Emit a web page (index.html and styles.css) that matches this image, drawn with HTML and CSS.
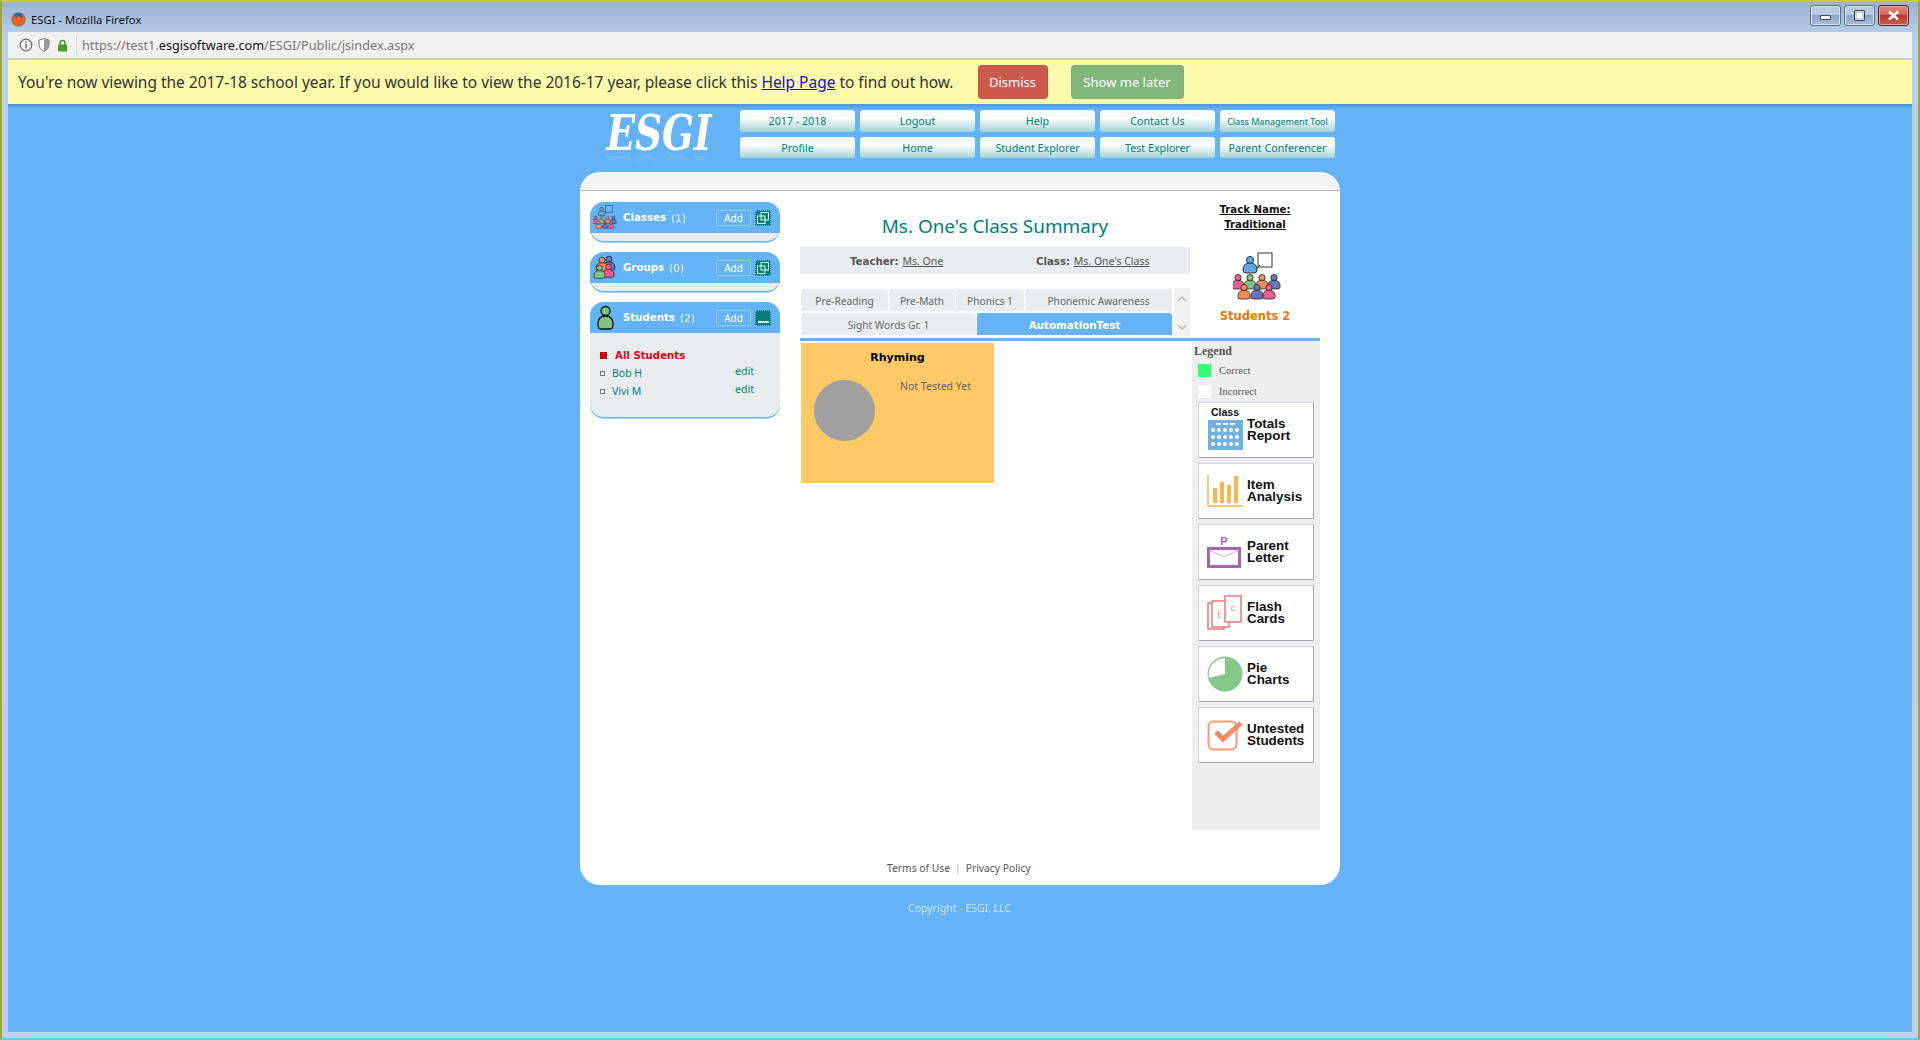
FILE: index.html
```html
<!DOCTYPE html>
<html lang="en">
  <head>
    <meta charset="UTF-8" />
    <title>ESGI - Mozilla Firefox</title>
    <link rel="stylesheet" href="styles.css">
  </head>
  <body>
    <svg class="defs" width="0" height="0">
      <symbol id="person" viewBox="-8 -5 16 20" overflow="visible">
        <circle cx="0" cy="0" r="3.6" stroke="#222" stroke-width="0.9"/>
        <path d="M-7 10q0-7 7-7q7 0 7 7q0 3-3 3h-8q-3 0-3-3z" stroke="#222" stroke-width="0.9"/>
      </symbol>
      <symbol id="class-icon" viewBox="0 0 48 50">
        <rect x="25" y="1" width="14" height="14" fill="none" stroke="#333" stroke-width="1"/>
        <path d="M20 21l7-8" stroke="#333" stroke-width="1"/>
        <use href="#person" x="9" y="3" width="16" height="20" fill="#62a9de"/>
        <use href="#person" x="-2" y="21" width="14" height="18" fill="#ec5e93"/>
        <use href="#person" x="10" y="21" width="14" height="18" fill="#7fc281"/>
        <use href="#person" x="22" y="21" width="14" height="18" fill="#f68a5f"/>
        <use href="#person" x="34" y="21" width="14" height="18" fill="#6a76b8"/>
        <use href="#person" x="4" y="31" width="14" height="18" fill="#f68a5f"/>
        <use href="#person" x="17" y="31" width="14" height="18" fill="#6a76b8"/>
        <use href="#person" x="29" y="31" width="14" height="18" fill="#ec5e93"/>
      </symbol>
      <symbol id="expand-icon" viewBox="0 0 16 16">
        <rect x="2.5" y="6" width="7.5" height="7.5" fill="none" stroke="#cfe" stroke-width="1"/>
        <rect x="6" y="2.5" width="7.5" height="7.5" fill="none" stroke="#cfe" stroke-width="1"/>
      </symbol>
    </svg>

    <div class="window">
      <div class="titlebar">
        <svg class="ff-logo" width="15" height="15" viewBox="0 0 16 16">
          <circle cx="8" cy="8" r="7.5" fill="#2f5f9e"/>
          <path d="M3 2.500Q1 5 1 8a7 7 0 0 0 14 0Q15 4 11.500 2q1.500 3-.5 5-1.500-3-4.500-3.500Q7.500 6 5.500 6 4 5.500 3 2.500z" fill="#e8661c"/>
        </svg>
        <span class="title-text">ESGI - Mozilla Firefox</span>
        <div class="win-controls">
          <div class="win-btn"><i class="glyph-min"></i></div>
          <div class="win-btn"><i class="glyph-max"></i></div>
          <div class="win-btn win-close">
            <svg width="13" height="11" viewBox="0 0 13 11"><path d="M2 1.500l9 8M11 1.500l-9 8" stroke="#fff" stroke-width="2.600"/></svg>
          </div>
        </div>
      </div>

      <div class="toolbar">
        <svg width="14" height="14" viewBox="0 0 14 14">
          <circle cx="7" cy="7" r="5.800" fill="none" stroke="#666" stroke-width="1.200"/>
          <path d="M7 6v4.500M7 3.500v1.500" stroke="#666" stroke-width="1.400"/>
        </svg>
        <svg width="12" height="14" viewBox="0 0 12 14">
          <path d="M1 2l5-1.500L11 2v5q0 4-5 6.500Q1 11 1 7z" fill="#fff" stroke="#777" stroke-width="1"/>
          <path d="M6 1v12q5-2.500 5-6V2z" fill="#999"/>
        </svg>
        <svg class="lock" width="11" height="13" viewBox="0 0 11 13">
          <path d="M3 6V4a2.500 2.500 0 0 1 5 0v2" fill="none" stroke="#4a9a2a" stroke-width="1.500"/>
          <rect x="1" y="5.500" width="9" height="7" rx="1" fill="#4a9a2a"/>
        </svg>
        <span class="url">https://test1.<b>esgisoftware.com</b>/ESGI/Public/jsindex.aspx</span>
      </div>

      <div class="banner">
        <span>You're now viewing the 2017-18 school year. If you would like to view the 2016-17 year, please click this <a href="#">Help Page</a> to find out how.</span>
        <button class="banner-btn btn-dismiss">Dismiss</button>
        <button class="banner-btn btn-later">Show me later</button>
      </div>

      <div class="page">
        <div class="shell">
          <header class="top">
            <div class="logo">ESGI</div>
            <nav class="nav">
              <a class="nav-btn">2017 - 2018</a>
              <a class="nav-btn">Logout</a>
              <a class="nav-btn">Help</a>
              <a class="nav-btn">Contact Us</a>
              <a class="nav-btn nav-small">Class Management Tool</a>
              <a class="nav-btn">Profile</a>
              <a class="nav-btn">Home</a>
              <a class="nav-btn">Student Explorer</a>
              <a class="nav-btn">Test Explorer</a>
              <a class="nav-btn">Parent Conferencer</a>
            </nav>
          </header>

          <div class="card">
            <div class="card-strip"></div>
            <div class="card-main">
              <aside class="side">
                <section class="panel">
                  <div class="panel-head">
                    <svg class="panel-icon" width="24" height="25"><use href="#class-icon"/></svg>
                    <span class="panel-name">Classes</span><span class="panel-count">(1)</span>
                    <span class="add-btn">Add</span>
                    <span class="sq-btn"><svg width="16" height="16"><use href="#expand-icon"/></svg></span>
                  </div>
                  <div class="panel-foot"></div>
                </section>
                <section class="panel">
                  <div class="panel-head">
                    <svg class="panel-icon" width="24" height="25" viewBox="0 0 24 25">
                      <use href="#person" x="9" y="0" width="14" height="17" fill="#6a76b8"/>
                      <use href="#person" x="2" y="1" width="14" height="17" fill="#f68a5f"/>
                      <use href="#person" x="9" y="8" width="13" height="16" fill="#ec5e93"/>
                      <use href="#person" x="0" y="9" width="13" height="16" fill="#7fc281"/>
                    </svg>
                    <span class="panel-name">Groups</span><span class="panel-count">(0)</span>
                    <span class="add-btn">Add</span>
                    <span class="sq-btn"><svg width="16" height="16"><use href="#expand-icon"/></svg></span>
                  </div>
                  <div class="panel-foot"></div>
                </section>
                <section class="panel">
                  <div class="panel-head">
                    <svg class="panel-icon" width="24" height="25" viewBox="0 0 24 25">
                      <circle cx="12.500" cy="6" r="4.500" fill="#7fc281" stroke="#111" stroke-width="1.300"/>
                      <path d="M5 19q0-8 7.500-8T20 19q0 5-3 5H8q-3 0-3-5z" fill="#7fc281" stroke="#111" stroke-width="1.300"/>
                    </svg>
                    <span class="panel-name">Students</span><span class="panel-count">(2)</span>
                    <span class="add-btn">Add</span>
                    <span class="sq-btn"><i class="sq-dash"></i></span>
                  </div>
                  <div class="panel-list">
                    <div class="all-row"><i class="bullet-red"></i>All Students</div>
                    <div class="student-row"><i class="bullet"></i><a class="student">Bob H</a><a class="edit">edit</a></div>
                    <div class="student-row"><i class="bullet"></i><a class="student">Vivi M</a><a class="edit">edit</a></div>
                  </div>
                </section>
              </aside>

              <main class="summary">
                <div class="summary-top">
                  <div class="summary-head">
                    <h1 class="summary-title">Ms. One's Class Summary</h1>
                    <div class="info-bar">
                      <span><b>Teacher:</b> <u>Ms. One</u></span>
                      <span><b>Class:</b> <u>Ms. One's Class</u></span>
                    </div>
                    <div class="tabs">
                      <div class="tab-rows">
                        <div class="tab-row tab-row-1">
                          <span class="tab">Pre-Reading</span>
                          <span class="tab">Pre-Math</span>
                          <span class="tab">Phonics 1</span>
                          <span class="tab">Phonemic Awareness</span>
                        </div>
                        <div class="tab-row tab-row-2">
                          <span class="tab">Sight Words Gr. 1</span>
                          <span class="tab tab-active">AutomationTest</span>
                        </div>
                      </div>
                      <div class="tab-scroll">
                        <svg width="10" height="6" viewBox="0 0 10 6"><path d="M1 5l4-4 4 4" fill="none" stroke="#bbb" stroke-width="1.500"/></svg>
                        <svg width="10" height="6" viewBox="0 0 10 6"><path d="M1 1l4 4 4-4" fill="none" stroke="#bbb" stroke-width="1.500"/></svg>
                      </div>
                    </div>
                  </div>
                  <div class="track">
                    <div class="track-name">Track Name:<br>Traditional</div>
                    <svg class="track-icon" width="48" height="50"><use href="#class-icon"/></svg>
                    <div class="track-count">Students 2</div>
                  </div>
                </div>

                <div class="summary-body">
                  <div class="tests">
                    <div class="test-card">
                      <div class="test-name">Rhyming</div>
                      <div class="test-row">
                        <div class="test-pie"></div>
                        <div class="test-note">Not Tested Yet</div>
                      </div>
                    </div>
                  </div>

                  <div class="reports">
                    <div class="legend-title">Legend</div>
                    <div class="legend-row"><i class="swatch swatch-green"></i>Correct</div>
                    <div class="legend-row legend-row-last"><i class="swatch swatch-white"></i>Incorrect</div>

                    <a class="report">
                      <svg class="icon-totals" width="36" height="44" viewBox="0 0 36 44">
                        <text x="18" y="9" class="report-over">Class</text>
                        <rect x="1" y="13" width="35" height="30" fill="#6fb1e2"/>
                        <g fill="#fff">
                          <rect x="9" y="16" width="5" height="2"/><rect x="16" y="16" width="5" height="2"/><rect x="23" y="16" width="5" height="2"/>
                          <circle cx="6" cy="23" r="2"/><circle cx="12" cy="23" r="2"/><circle cx="18" cy="23" r="2"/><circle cx="24" cy="23" r="2"/><circle cx="30" cy="23" r="2"/>
                          <circle cx="6" cy="30" r="2"/><circle cx="12" cy="30" r="2"/><circle cx="18" cy="30" r="2"/><circle cx="24" cy="30" r="2"/><circle cx="30" cy="30" r="2"/>
                          <circle cx="6" cy="37" r="2"/><circle cx="12" cy="37" r="2"/><circle cx="18" cy="37" r="2"/><circle cx="24" cy="37" r="2"/><circle cx="30" cy="37" r="2"/>
                        </g>
                      </svg>
                      <span class="report-text">Totals<br>Report</span>
                    </a>
                    <a class="report">
                      <svg width="36" height="32" viewBox="0 0 36 32">
                        <path d="M1 0v31h35" fill="none" stroke="#fbb54c" stroke-width="1.500"/>
                        <g fill="#fbb54c">
                          <rect x="6" y="13" width="4" height="15"/><rect x="13" y="7" width="4" height="21"/><rect x="20" y="10" width="4" height="18"/><rect x="27" y="1" width="4" height="27"/>
                        </g>
                      </svg>
                      <span class="report-text">Item<br>Analysis</span>
                    </a>
                    <a class="report">
                      <svg width="36" height="34" viewBox="0 0 36 34">
                        <text x="17" y="11" class="report-p">P</text>
                        <rect x="1.500" y="14.500" width="31" height="18" fill="#fff" stroke="#a964ae" stroke-width="3"/>
                        <path d="M2 16l15 7 15-7" fill="none" stroke="#d3a8d6" stroke-width="1"/>
                      </svg>
                      <span class="report-text">Parent<br>Letter</span>
                    </a>
                    <a class="report">
                      <svg class="icon-tall" width="36" height="36" viewBox="0 0 36 36">
                        <rect x="1" y="8" width="16" height="26" fill="#fff" stroke="#e97a7a" stroke-width="1.500"/>
                        <rect x="5" y="6" width="17" height="26" fill="#fff" stroke="#e97a7a" stroke-width="1.500"/>
                        <rect x="18" y="1" width="16" height="26" fill="#fff" stroke="#e97a7a" stroke-width="1.500"/>
                        <text x="12" y="23" class="report-card-letter">f</text>
                        <text x="26" y="16" class="report-card-letter">c</text>
                      </svg>
                      <span class="report-text">Flash<br>Cards</span>
                    </a>
                    <a class="report">
                      <svg class="icon-tall" width="36" height="36" viewBox="0 0 36 36">
                        <circle cx="18" cy="18" r="17" fill="#85c787"/>
                        <path d="M18 18V2A16.500 16.500 0 0 0 2 22z" fill="#fff"/>
                        <circle cx="18" cy="18" r="17" fill="none" stroke="#85c787" stroke-width="1"/>
                      </svg>
                      <span class="report-text">Pie<br>Charts</span>
                    </a>
                    <a class="report">
                      <svg width="36" height="32" viewBox="0 0 36 32">
                        <rect x="1.500" y="2.500" width="28" height="28" rx="5" fill="#fff" stroke="#f79a76" stroke-width="2"/>
                        <path d="M9 13l7 7L34 4" fill="none" stroke="#f58a64" stroke-width="5"/>
                      </svg>
                      <span class="report-text">Untested<br>Students</span>
                    </a>
                  </div>
                </div>
              </main>
            </div>

            <footer class="card-foot">
              <a>Terms of Use</a><span class="foot-sep">|</span><a>Privacy Policy</a>
            </footer>
          </div>

          <div class="copyright">Copyright - ESGI, LLC</div>
        </div>
      </div>
    </div>
  </body>
</html>
```

FILE: styles.css
```css
* {
  box-sizing: border-box;
}

html,
body {
  margin: 0;
  height: 100%;
  overflow: hidden;
}

body {
  font-family: "Noto Sans", sans-serif;
  font-size: 11px;
}

.defs {
  position: absolute;
}

/* browser window */
.window {
  height: 1040px;
  display: flex;
  flex-direction: column;
  padding: 0 6px 6px;
  border: 2px solid #a3a336;
  border-top-color: #c9c93e;
  border-bottom-color: #35e0f0;
  background: linear-gradient(#9ab3d2 0, #b9d0ea 36px, #bcd0e9 100%);
}

.titlebar {
  height: 30px;
  flex: none;
  display: flex;
  align-items: center;
  gap: 5px;
  padding: 4px 0 0 3px;
}

.title-text {
  font-size: 11.300px;
  color: #111;
}

.win-controls {
  margin-left: auto;
  display: flex;
  gap: 3px;
  margin-right: 3px;
  margin-top: -7px;
}

.win-btn {
  width: 31px;
  height: 21px;
  border: 1px solid #5f6e85;
  border-radius: 3px;
  display: flex;
  align-items: center;
  justify-content: center;
  background: linear-gradient(#b6cbe4 0, #b6cbe4 45%, #8ba6c5 50%, #a5bfdc 100%);
  box-shadow: inset 0 0 0 1px #d8e4f2;
}

.win-close {
  border-color: #5a1f28;
  background: linear-gradient(#dc8a7c 0, #d2675a 45%, #b7352a 50%, #c9604f 100%);
  box-shadow: inset 0 0 0 1px #e6a79c;
}

.glyph-min {
  width: 11px;
  height: 5px;
  margin-top: 4px;
  background: #fff;
  border: 1px solid #444;
  border-radius: 1px;
}

.glyph-max {
  width: 11px;
  height: 11px;
  background: #fff;
  border: 1px solid #444;
  border-radius: 1px;
  box-shadow: inset 0 0 0 2px #c5d3e5;
}

.toolbar {
  height: 28px;
  flex: none;
  display: flex;
  align-items: center;
  gap: 5px;
  padding-left: 11px;
  background: #f0f0f0;
  border-bottom: 2px solid #cfcfcf;
}

.lock {
  margin-left: 2px;
}

.url {
  margin-left: 3px;
  padding-left: 5px;
  border-left: 1px solid #d8d8d8;
  line-height: 18px;
  font-size: 12.700px;
  color: #777;
}

.url b {
  font-weight: 400;
  color: #111;
}

.banner {
  height: 44px;
  flex: none;
  display: flex;
  align-items: center;
  padding-left: 10px;
  background: #fdf9ac;
  font-size: 15.500px;
  letter-spacing: -0.02px;
  color: #333;
}

.banner a {
  color: #1a0dcc;
  text-decoration: underline;
}

.banner-btn {
  height: 34px;
  border: 1px solid rgba(0, 0, 0, 0.06);
  border-radius: 4px;
  color: #fff;
  font: 13px "Noto Sans", sans-serif;
}

.btn-dismiss {
  width: 70px;
  margin-left: 24px;
  background: #cb5a4c;
}

.btn-later {
  width: 113px;
  margin-left: 23px;
  background: #82b77c;
}

/* page */
.page {
  flex: 1;
  background: linear-gradient(#4a93d6 0, #63b3f6 5px);
}

.shell {
  width: 760px;
  margin: 0 auto;
}

.top {
  height: 68px;
  padding-top: 6px;
  display: flex;
}

.logo {
  width: 160px;
  height: 46px;
  padding-left: 34px;
  color: #fff;
  font: italic 700 48px/46px "DejaVu Serif", serif;
  transform: scaleX(0.78);
  transform-origin: left;
  -webkit-box-reflect: below -6px linear-gradient(transparent 70%, rgba(255, 255, 255, 0.22));
}

.nav {
  display: grid;
  grid-template-columns: repeat(5, 115px);
  grid-template-rows: 22px 21px;
  column-gap: 5px;
  row-gap: 5px;
}

.nav-btn {
  display: flex;
  align-items: center;
  justify-content: center;
  border-radius: 3px;
  background: linear-gradient(#eef7f7 0, #fff 35%, #a5d3d4 100%);
  color: #007f7c;
  font-size: 10.700px;
}

.nav-small {
  font-size: 9px;
}

.card {
  height: 713px;
  background: #fff;
  border-radius: 20px;
  display: flex;
  flex-direction: column;
  overflow: hidden;
}

.card-strip {
  height: 19px;
  flex: none;
  background: #f3f3f3;
  border-bottom: 1px solid #b5b5b5;
}

.card-main {
  display: flex;
  padding: 11px 20px 0 10px;
  flex: 1;
  min-height: 0;
}

/* left panels */
.side {
  width: 190px;
  flex: none;
  margin-right: 20px;
  display: flex;
  flex-direction: column;
  gap: 10px;
}

.panel {
  background: #e9ecee;
  border-radius: 14px;
  border-bottom: 1px solid #62b2ef;
  box-shadow: 0 1px 0 #a8d2f3;
}

.panel-head {
  height: 31px;
  background: #63b3f6;
  border-radius: 14px 14px 0 0;
  display: flex;
  align-items: center;
  padding-left: 3px;
  color: #fff;
}

.panel-icon {
  flex: none;
  margin-right: 6px;
}

.panel-name {
  font: 700 10.200px "DejaVu Sans", sans-serif;
}

.panel-count {
  margin-left: 5px;
  font: 10.500px "DejaVu Sans", sans-serif;
  color: #e8f5ff;
}

.add-btn {
  position: absolute;
  width: 35px;
  height: 16px;
  border: 1px solid #8fd0d8;
  border-radius: 2px;
  margin-left: 123px;
  text-align: center;
  line-height: 14px;
  font-size: 10px;
}

.sq-btn {
  position: absolute;
  margin-left: 162px;
  width: 16px;
  height: 16px;
  background: #0a7d76;
  border: 1px dotted #63b3f6;
  display: flex;
  align-items: center;
  justify-content: center;
}

.sq-btn svg {
  flex: none;
}

.sq-dash {
  width: 11px;
  height: 2px;
  margin-top: 9px;
  background: #d8ecea;
}

.panel-foot {
  height: 8px;
}

.panel-list {
  padding: 13px 10px 14px;
  height: 84px;
}

.all-row {
  display: flex;
  align-items: center;
  height: 18px;
  color: #f00014;
  font: 700 10.200px "DejaVu Sans", sans-serif;
}

.bullet-red {
  width: 7px;
  height: 7px;
  margin-right: 8px;
  background: #c80010;
}

.student-row {
  display: flex;
  align-items: center;
  height: 18px;
  color: #00808a;
  font-size: 10.500px;
}

.bullet {
  width: 5px;
  height: 5px;
  margin-right: 7px;
  border: 1px solid #777;
  background: #fff;
}

.edit {
  margin-left: auto;
  margin-right: 16px;
  margin-top: -4px;
  color: #007f7c;
}

/* summary column */
.summary {
  flex: 1;
  min-width: 0;
}

.summary-top {
  display: flex;
  border-bottom: 3px solid #63b3f6;
  height: 139px;
}

.summary-head {
  width: 390px;
  flex: none;
}

.summary-title {
  margin: 0;
  height: 45px;
  padding-top: 11px;
  text-align: center;
  font-size: 18.900px;
  line-height: 26px;
  font-weight: 400;
  color: #007f78;
}

.info-bar {
  height: 27px;
  background: #eaecef;
  display: flex;
  align-items: center;
  color: #555;
  font-size: 10.500px;
}

.info-bar span:first-child {
  width: 236px;
  padding-left: 50px;
}

.info-bar b {
  font: 700 10.200px "DejaVu Sans", sans-serif;
  margin-right: 1px;
}

.tabs {
  display: flex;
  margin-top: 14px;
  padding-left: 1px;
  gap: 2px;
}

.tab-rows {
  width: 371px;
  display: flex;
  flex-direction: column;
  gap: 2px;
  padding-top: 1px;
}

.tab-row {
  display: grid;
  gap: 1px;
  height: 22px;
}

.tab-row-1 {
  grid-template-columns: 87px 66px 68px 147px;
}

.tab-row-2 {
  grid-template-columns: 175px 195px;
}

.tab {
  display: flex;
  align-items: center;
  justify-content: center;
  padding-top: 2px;
  background: #eaecef;
  border-radius: 3px 3px 0 0;
  color: #666;
  font-size: 10.200px;
}

.tab-active {
  background: #63b3f6;
  color: #fff;
  font: 700 10.300px "DejaVu Sans", sans-serif;
}

.tab-scroll {
  width: 16px;
  height: 48px;
  background: #f1f1f1;
  display: flex;
  flex-direction: column;
  justify-content: space-between;
  align-items: center;
  padding: 8px 0 6px;
}

.track {
  flex: 1;
  display: flex;
  flex-direction: column;
  align-items: center;
  padding-top: 0;
}

.track-name {
  text-align: center;
  font: 700 10.200px/15px "DejaVu Sans", sans-serif;
  color: #111;
  text-decoration: underline;
}

.track-icon {
  margin-top: 20px;
  margin-left: 3px;
}

.track-count {
  margin-top: 7px;
  color: #e8780c;
  font: 700 11.500px "DejaVu Sans", sans-serif;
}

.summary-body {
  display: flex;
}

.tests {
  width: 392px;
  flex: none;
  padding: 2px 0 0 1px;
}

.test-card {
  width: 193px;
  height: 140px;
  background: #fdc966;
  padding-top: 8px;
}

.test-name {
  text-align: center;
  color: #000;
  font: 700 11px "DejaVu Sans", sans-serif;
}

.test-row {
  display: flex;
  margin-top: 8px;
  padding-left: 13px;
}

.test-pie {
  width: 61px;
  height: 61px;
  flex: none;
  margin-top: 8px;
  border-radius: 50%;
  background: #a0a0a0;
}

.test-note {
  margin-left: 25px;
  margin-top: 7px;
  color: #666;
  font-size: 10.500px;
}

/* legend and report buttons */
.reports {
  width: 128px;
  height: 489px;
  flex: none;
  background: #eeeeee;
  padding: 1px 6px 0;
}

.legend-title {
  margin-left: -4px;
  height: 18px;
  font: 700 12px/19px "Liberation Serif", serif;
  color: #555;
}

.legend-row {
  display: flex;
  align-items: center;
  height: 20px;
  font: 10.500px "Liberation Serif", serif;
  color: #555;
}

.legend-row-last {
  height: 22px;
}

.swatch {
  width: 13px;
  height: 13px;
  margin-right: 8px;
}

.swatch-green {
  background: #33ff77;
}

.swatch-white {
  background: #fff;
}

.report {
  display: flex;
  align-items: flex-end;
  gap: 4px;
  height: 56px;
  margin-bottom: 5px;
  padding-left: 8px;
  background: #fff;
  border: 1px solid #cfd6e2;
  border-right-color: #a2a6b2;
  border-bottom-color: #a2a6b2;
}

.report svg {
  flex: none;
  margin-bottom: 11px;
}

.report .icon-tall {
  margin-bottom: 9px;
}

.report .icon-totals {
  margin-bottom: 6px;
}

.report-text {
  margin-bottom: 15px;
  font: 700 13.400px/12px "Liberation Sans", sans-serif;
  color: #111;
}

.report-over {
  font: 700 10.500px "Liberation Sans", sans-serif;
  text-anchor: middle;
  fill: #111;
}

.report-p {
  font: 700 11px "Liberation Sans", sans-serif;
  text-anchor: middle;
  fill: #a964ae;
}

.report-card-letter {
  font: 10px "Liberation Serif", serif;
  text-anchor: middle;
  fill: #ee7070;
}

.card-foot {
  height: 24px;
  flex: none;
  padding: 0 0 0 307px;
  color: #555;
  font-size: 10.300px;
}

.foot-sep {
  margin: 0 5px;
  color: #bbb;
}

.copyright {
  margin-top: 16px;
  padding-left: 328px;
  color: #c5e5fa;
  font-size: 10.500px;
}
```
